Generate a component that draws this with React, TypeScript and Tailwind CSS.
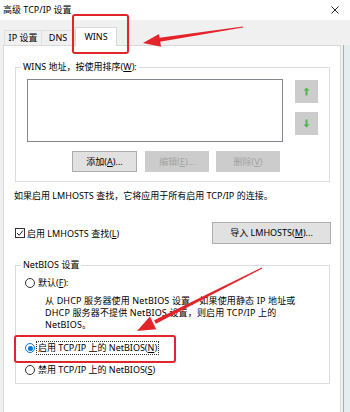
import React from "react";

const font = "font-['Noto_Sans','Noto_Sans_CJK_SC',sans-serif]";

function Radio({ checked }: { checked?: boolean }) {
  return (
    <span
      className={
        "inline-flex h-[10px] w-[10px] shrink-0 items-center justify-center rounded-full border bg-white " +
        (checked ? "border-[#0078d7]" : "border-[#333333]")
      }
    >
      {checked && <span className="h-[5px] w-[5px] rounded-full bg-[#0078d7]" />}
    </span>
  );
}

function ArrowButton({ dir }: { dir: "up" | "down" }) {
  return (
    <div className="flex h-[23px] w-[23px] items-center justify-center bg-[#cccccc]">
      <svg width="7" height="9" viewBox="0 0 7 9">
        {dir === "up" ? (
          <path d="M3.5 0.5 L6.5 3.5 L4.5 3.5 L4.5 8.5 L2.5 8.5 L2.5 3.5 L0.5 3.5 Z" fill="#4cb84c" />
        ) : (
          <path d="M3.5 8.5 L6.5 5.5 L4.5 5.5 L4.5 0.5 L2.5 0.5 L2.5 5.5 L0.5 5.5 Z" fill="#4cb84c" />
        )}
      </svg>
    </div>
  );
}

export default function App() {
  return (
    <div className={`relative h-[412px] w-[350px] overflow-hidden bg-[#f0f0f0] text-[9px] leading-[12px] text-black ${font}`}>
      {/* title bar */}
      <div className="flex h-[20px] items-center justify-between bg-white pl-[3px] pr-[11px]">
        <span>高级 TCP/IP 设置</span>
        <svg width="8" height="8" viewBox="0 0 8 8">
          <path d="M0.5 0.5 L7.5 7.5 M7.5 0.5 L0.5 7.5" stroke="#222" strokeWidth="1" />
        </svg>
      </div>

      {/* tabs */}
      <div className="flex h-[25px] items-end pl-[4px]">
        <div className="flex h-[15px] w-[38px] items-center justify-center border-l border-r border-t border-[#e0e0e0]">
          IP 设置
        </div>
        <div className="flex h-[15px] w-[33px] items-center justify-center border-r border-t border-[#e0e0e0]">
          DNS
        </div>
        <div className="relative -mb-px flex h-[19px] w-[42px] items-start justify-center border-l border-r border-t border-[#d9d9d9] bg-white pt-[3px]">
          WINS
        </div>
      </div>

      <div className="flex">
        {/* tab page */}
        <div className="ml-[3px] h-[380px] w-[338px] border border-[#d9d9d9] bg-white pl-[11px]">
          <fieldset className="mt-[15px] w-[315px] border border-[#dcdcdc] pb-[9px]">
            <legend className="ml-[5px] px-[2px] leading-[12px]">
              WINS 地址，按使用排序(<span className="underline">W</span>):
            </legend>
            <div className="mt-[6px] flex">
              <div className="ml-[11px] h-[63px] w-[256px] border border-[#828790] bg-white" />
              <div className="ml-[12px] mt-[1px] flex flex-col gap-[9px]">
                <ArrowButton dir="up" />
                <ArrowButton dir="down" />
              </div>
            </div>
            <div className="ml-[56px] mt-[9px] flex">
              <button className="flex h-[21px] w-[65px] items-center justify-center border border-[#adadad] bg-[#e1e1e1]">
                添加(<span className="underline">A</span>)...
              </button>
              <button className="ml-[8px] flex h-[21px] w-[64px] items-center justify-center border border-[#cccccc] bg-[#cccccc] text-[#a3a3a3]">
                编辑(<span className="underline">E</span>)...
              </button>
              <button className="ml-[7px] flex h-[21px] w-[64px] items-center justify-center border border-[#cccccc] bg-[#cccccc] text-[#a3a3a3]">
                删除(<span className="underline">V</span>)
              </button>
            </div>
          </fieldset>

          <p className="-ml-px mt-[8px]">如果启用 LMHOSTS 查找，它将应用于所有启用 TCP/IP 的连接。</p>

          <div className="mt-[20px] flex h-[22px] items-center">
            <span className="flex h-[10px] w-[10px] items-center justify-center border border-[#333333] bg-white">
              <svg width="8" height="8" viewBox="0 0 8 8">
                <path d="M1 4 L3.2 6.3 L7 1.5" fill="none" stroke="#222" strokeWidth="1" />
              </svg>
            </span>
            <span className="ml-[2px] mt-[2px]">
              启用 LMHOSTS 查找(<span className="underline">L</span>)
            </span>
            <button className="ml-auto mr-[9px] flex h-[22px] w-[119px] items-center justify-center border border-[#adadad] bg-[#e1e1e1]">
              导入 LMHOSTS(<span className="underline">M</span>)...
            </button>
          </div>

          <fieldset className="mt-[15px] w-[315px] border border-[#dcdcdc] pb-[7px]">
            <legend className="ml-[5px] px-[2px] leading-[12px]">NetBIOS 设置</legend>
            <div className="ml-[9px] mt-[6px] flex items-center">
              <Radio />
              <span className="ml-[3px]">
                默认(<span className="underline">F</span>):
              </span>
            </div>
            <p className="ml-[29px] mt-[6px] tracking-[0.15px]">
              从 DHCP 服务器使用 NetBIOS 设置。如果使用静态 IP 地址或
              <br />
              DHCP 服务器不提供 NetBIOS 设置，则启用 TCP/IP 上的
              <br />
              NetBIOS。
            </p>
            <div className="ml-[9px] mt-[10px] flex items-center">
              <Radio checked />
              <span className="ml-px border border-dotted border-[#333333] px-px">
                启用 TCP/IP 上的 NetBIOS(<span className="underline">N</span>)
              </span>
            </div>
            <div className="ml-[9px] mt-[9px] flex items-center">
              <Radio />
              <span className="ml-[3px]">
                禁用 TCP/IP 上的 NetBIOS(<span className="underline">S</span>)
              </span>
            </div>
          </fieldset>
        </div>

        {/* window edge */}
        <div className="ml-[2px] h-[380px] w-px bg-[#9fb0bb]" />
        <div className="h-[380px] flex-1 bg-[#e6edf1]" />
      </div>

      {/* annotations */}
      <svg className="pointer-events-none absolute left-0 top-0" width="350" height="412" viewBox="0 0 350 412">
        <rect x="73" y="15" width="55" height="38" rx="2" fill="none" stroke="#e3242b" strokeWidth="2" />
        <rect x="15" y="336" width="160" height="26" rx="2" fill="none" stroke="#e3242b" strokeWidth="2" />
        <path d="M243 26.5 L157.7 38 L158.3 42 L243 27.5 Z" fill="#e3242b" />
        <path d="M143 43 L161 46.7 L159 34 Z" fill="#e3242b" />
        <path d="M261.7 267.4 L154.1 320.2 L155.9 323.8 L262.3 268.6 Z" fill="#e3242b" />
        <path d="M137 331 L156.2 329.2 L149.9 316.6 Z" fill="#e3242b" />
      </svg>
    </div>
  );
}
